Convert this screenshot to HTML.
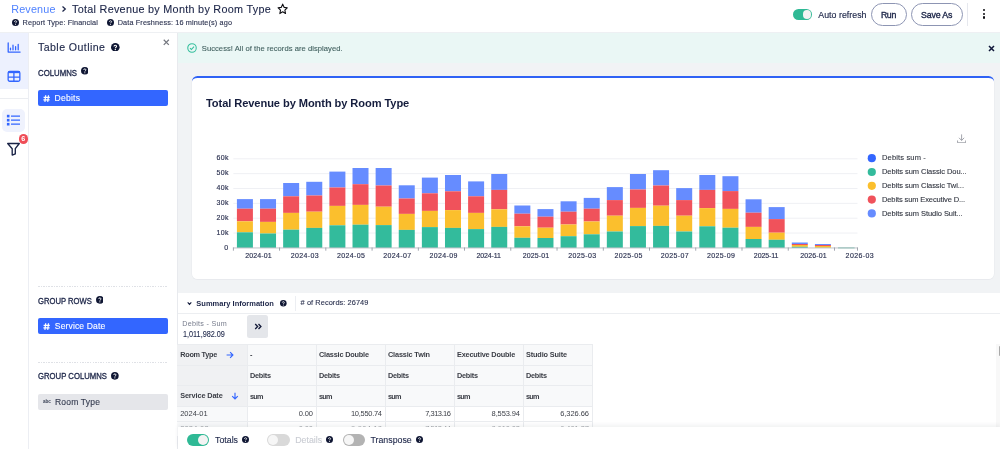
<!DOCTYPE html>
<html><head><meta charset="utf-8"><title>Total Revenue by Month by Room Type</title>
<style>
html,body{margin:0;padding:0;background:#fff;}
body{width:1000px;height:449px;position:relative;overflow:hidden;font-family:"Liberation Sans",sans-serif;-webkit-font-smoothing:antialiased;}
.abs{position:absolute;}
.t{position:absolute;white-space:nowrap;line-height:14px;height:14px;}
#root{position:absolute;left:0;top:0;width:1000px;height:449px;will-change:transform;transform:translateZ(0);}
</style></head><body><div id="root">

<div class="abs" style="left:0;top:32px;width:1000px;height:1px;background:#eef0f3"></div>
<div class="abs" style="left:0;top:33px;width:28.5px;height:55.5px;background:#edf1fe"></div>
<div class="abs" style="left:0;top:97.6px;width:28.5px;height:1px;background:#ebedf1"></div>
<div class="abs" style="left:27.9px;top:33px;width:1px;height:416px;background:#eceef3"></div>
<div class="abs" style="left:2.4px;top:108.5px;width:22.6px;height:23px;border-radius:5px;background:#eff2fd"></div>
<div class="abs" style="left:177.4px;top:33px;width:822.6px;height:260.3px;background:#f1f3f5"></div>
<div class="abs" style="left:177px;top:33px;width:1px;height:416px;background:#e8eaee"></div>
<div class="abs" style="left:178px;top:32.6px;width:822px;height:30.4px;background:#eaf7f5"></div>
<div class="abs" style="left:191.7px;top:75.7px;width:802.8px;height:203px;box-sizing:border-box;background:#fff;border-top:2.5px solid #2f62f5;border-radius:5.5px;box-shadow:0 0.4px 0 0.5px #e8eaee"></div>
<div class="abs" style="left:178px;top:313px;width:822px;height:1px;background:#eceef1"></div>
<div class="abs" style="left:294.8px;top:296px;width:1px;height:14.6px;background:#eceef2"></div>
<div class="abs" style="left:247px;top:315px;width:21.4px;height:22.6px;border-radius:2.5px;background:#e4e6ea"></div>
<svg class="abs" style="left:253.6px;top:323.4px" width="8" height="7" viewBox="0 0 8 7"><path d="M1.2 1.1 3.6 3.5 1.2 5.9M4.5 1.1 6.9 3.5 4.5 5.9" fill="none" stroke="#141b3a" stroke-width="1.35"/></svg>
<div class="abs" style="left:177.4px;top:344.2px;width:70px;height:61.8px;background:#f0f1f3"></div>
<div class="abs" style="left:247.4px;top:344.2px;width:345px;height:61.8px;background:#f8f9fa"></div>
<div class="abs" style="left:177.4px;top:406.0px;width:70px;height:30.4px;background:#f8f9fa"></div>
<div class="abs" style="left:177.4px;top:343.7px;width:415.5px;height:1px;background:#eaecef"></div>
<div class="abs" style="left:177.4px;top:364.7px;width:415.5px;height:1px;background:#eaecef"></div>
<div class="abs" style="left:177.4px;top:384.9px;width:415.5px;height:1px;background:#eaecef"></div>
<div class="abs" style="left:177.4px;top:405.5px;width:415.5px;height:1px;background:#eaecef"></div>
<div class="abs" style="left:177.4px;top:420.7px;width:415.5px;height:1px;background:#eaecef"></div>
<div class="abs" style="left:246.9px;top:344.2px;width:1px;height:90px;background:#eaecef"></div>
<div class="abs" style="left:315.9px;top:344.2px;width:1px;height:90px;background:#eaecef"></div>
<div class="abs" style="left:384.9px;top:344.2px;width:1px;height:90px;background:#eaecef"></div>
<div class="abs" style="left:453.9px;top:344.2px;width:1px;height:90px;background:#eaecef"></div>
<div class="abs" style="left:522.9px;top:344.2px;width:1px;height:90px;background:#eaecef"></div>
<div class="abs" style="left:591.9px;top:344.2px;width:1px;height:90px;background:#eaecef"></div>
<svg class="abs" style="left:225.6px;top:350.5px" width="8" height="8" viewBox="0 0 8 8"><path d="M0.6 4H6.8M4.1 1.2 6.9 4 4.1 6.8" fill="none" stroke="#3366ff" stroke-width="1.15"/></svg>
<svg class="abs" style="left:230.6px;top:391.7px" width="8" height="8" viewBox="0 0 8 8"><path d="M4 0.7V6.9M1.2 4.2 4 7 6.8 4.2" fill="none" stroke="#3366ff" stroke-width="1.15"/></svg>
<div class="abs" style="left:996.4px;top:344px;width:3.6px;height:84px;background:#f8f8f8"></div>
<div class="abs" style="left:998.5px;top:346px;width:2.5px;height:10.4px;border-radius:1.2px;background:#a9a9a9"></div>
<svg class="abs" style="left:0;top:0" width="1000" height="449" viewBox="0 0 1000 449">
<rect x="233.35" y="158.30" width="624.15" height="1" fill="#eff0f4"/>
<rect x="233.35" y="173.15" width="624.15" height="1" fill="#eff0f4"/>
<rect x="233.35" y="188.00" width="624.15" height="1" fill="#eff0f4"/>
<rect x="233.35" y="202.85" width="624.15" height="1" fill="#eff0f4"/>
<rect x="233.35" y="217.70" width="624.15" height="1" fill="#eff0f4"/>
<rect x="233.35" y="232.55" width="624.15" height="1" fill="#eff0f4"/>
<rect x="236.91" y="199.10" width="16.0" height="9.60" fill="#668cff"/>
<rect x="236.91" y="208.70" width="16.0" height="12.60" fill="#f0525b"/>
<rect x="236.91" y="221.30" width="16.0" height="11.00" fill="#fbbf2d"/>
<rect x="236.91" y="232.30" width="16.0" height="15.60" fill="#33bb9c"/>
<rect x="260.03" y="199.10" width="16.0" height="9.60" fill="#668cff"/>
<rect x="260.03" y="208.70" width="16.0" height="13.20" fill="#f0525b"/>
<rect x="260.03" y="221.90" width="16.0" height="11.60" fill="#fbbf2d"/>
<rect x="260.03" y="233.50" width="16.0" height="14.40" fill="#33bb9c"/>
<rect x="283.15" y="183.00" width="16.0" height="13.30" fill="#668cff"/>
<rect x="283.15" y="196.30" width="16.0" height="16.60" fill="#f0525b"/>
<rect x="283.15" y="212.90" width="16.0" height="16.80" fill="#fbbf2d"/>
<rect x="283.15" y="229.70" width="16.0" height="18.20" fill="#33bb9c"/>
<rect x="306.27" y="181.80" width="16.0" height="13.70" fill="#668cff"/>
<rect x="306.27" y="195.50" width="16.0" height="16.20" fill="#f0525b"/>
<rect x="306.27" y="211.70" width="16.0" height="16.20" fill="#fbbf2d"/>
<rect x="306.27" y="227.90" width="16.0" height="20.00" fill="#33bb9c"/>
<rect x="329.39" y="171.60" width="16.0" height="15.90" fill="#668cff"/>
<rect x="329.39" y="187.50" width="16.0" height="18.40" fill="#f0525b"/>
<rect x="329.39" y="205.90" width="16.0" height="19.40" fill="#fbbf2d"/>
<rect x="329.39" y="225.30" width="16.0" height="22.60" fill="#33bb9c"/>
<rect x="352.51" y="168.00" width="16.0" height="16.20" fill="#668cff"/>
<rect x="352.51" y="184.20" width="16.0" height="20.70" fill="#f0525b"/>
<rect x="352.51" y="204.90" width="16.0" height="19.80" fill="#fbbf2d"/>
<rect x="352.51" y="224.70" width="16.0" height="23.20" fill="#33bb9c"/>
<rect x="375.63" y="168.00" width="16.0" height="17.50" fill="#668cff"/>
<rect x="375.63" y="185.50" width="16.0" height="21.20" fill="#f0525b"/>
<rect x="375.63" y="206.70" width="16.0" height="18.40" fill="#fbbf2d"/>
<rect x="375.63" y="225.10" width="16.0" height="22.80" fill="#33bb9c"/>
<rect x="398.75" y="185.30" width="16.0" height="13.20" fill="#668cff"/>
<rect x="398.75" y="198.50" width="16.0" height="15.40" fill="#f0525b"/>
<rect x="398.75" y="213.90" width="16.0" height="16.00" fill="#fbbf2d"/>
<rect x="398.75" y="229.90" width="16.0" height="18.00" fill="#33bb9c"/>
<rect x="421.87" y="177.60" width="16.0" height="15.70" fill="#668cff"/>
<rect x="421.87" y="193.30" width="16.0" height="17.60" fill="#f0525b"/>
<rect x="421.87" y="210.90" width="16.0" height="16.20" fill="#fbbf2d"/>
<rect x="421.87" y="227.10" width="16.0" height="20.80" fill="#33bb9c"/>
<rect x="444.99" y="175.00" width="16.0" height="16.30" fill="#668cff"/>
<rect x="444.99" y="191.30" width="16.0" height="18.80" fill="#f0525b"/>
<rect x="444.99" y="210.10" width="16.0" height="17.80" fill="#fbbf2d"/>
<rect x="444.99" y="227.90" width="16.0" height="20.00" fill="#33bb9c"/>
<rect x="468.11" y="181.40" width="16.0" height="14.90" fill="#668cff"/>
<rect x="468.11" y="196.30" width="16.0" height="16.60" fill="#f0525b"/>
<rect x="468.11" y="212.90" width="16.0" height="16.20" fill="#fbbf2d"/>
<rect x="468.11" y="229.10" width="16.0" height="18.80" fill="#33bb9c"/>
<rect x="491.23" y="174.00" width="16.0" height="15.90" fill="#668cff"/>
<rect x="491.23" y="189.90" width="16.0" height="19.40" fill="#f0525b"/>
<rect x="491.23" y="209.30" width="16.0" height="17.60" fill="#fbbf2d"/>
<rect x="491.23" y="226.90" width="16.0" height="21.00" fill="#33bb9c"/>
<rect x="514.35" y="205.50" width="16.0" height="8.20" fill="#668cff"/>
<rect x="514.35" y="213.70" width="16.0" height="12.60" fill="#f0525b"/>
<rect x="514.35" y="226.30" width="16.0" height="11.50" fill="#fbbf2d"/>
<rect x="514.35" y="237.80" width="16.0" height="10.10" fill="#33bb9c"/>
<rect x="537.47" y="209.10" width="16.0" height="7.60" fill="#668cff"/>
<rect x="537.47" y="216.70" width="16.0" height="11.00" fill="#f0525b"/>
<rect x="537.47" y="227.70" width="16.0" height="10.30" fill="#fbbf2d"/>
<rect x="537.47" y="238.00" width="16.0" height="9.90" fill="#33bb9c"/>
<rect x="560.59" y="201.30" width="16.0" height="10.40" fill="#668cff"/>
<rect x="560.59" y="211.70" width="16.0" height="12.80" fill="#f0525b"/>
<rect x="560.59" y="224.50" width="16.0" height="11.70" fill="#fbbf2d"/>
<rect x="560.59" y="236.20" width="16.0" height="11.70" fill="#33bb9c"/>
<rect x="583.71" y="197.90" width="16.0" height="10.80" fill="#668cff"/>
<rect x="583.71" y="208.70" width="16.0" height="12.80" fill="#f0525b"/>
<rect x="583.71" y="221.50" width="16.0" height="12.80" fill="#fbbf2d"/>
<rect x="583.71" y="234.30" width="16.0" height="13.60" fill="#33bb9c"/>
<rect x="606.83" y="187.10" width="16.0" height="13.00" fill="#668cff"/>
<rect x="606.83" y="200.10" width="16.0" height="15.60" fill="#f0525b"/>
<rect x="606.83" y="215.70" width="16.0" height="15.80" fill="#fbbf2d"/>
<rect x="606.83" y="231.50" width="16.0" height="16.40" fill="#33bb9c"/>
<rect x="629.95" y="174.00" width="16.0" height="15.50" fill="#668cff"/>
<rect x="629.95" y="189.50" width="16.0" height="18.40" fill="#f0525b"/>
<rect x="629.95" y="207.90" width="16.0" height="18.20" fill="#fbbf2d"/>
<rect x="629.95" y="226.10" width="16.0" height="21.80" fill="#33bb9c"/>
<rect x="653.07" y="170.20" width="16.0" height="15.30" fill="#668cff"/>
<rect x="653.07" y="185.50" width="16.0" height="20.20" fill="#f0525b"/>
<rect x="653.07" y="205.70" width="16.0" height="20.20" fill="#fbbf2d"/>
<rect x="653.07" y="225.90" width="16.0" height="22.00" fill="#33bb9c"/>
<rect x="676.19" y="188.10" width="16.0" height="12.00" fill="#668cff"/>
<rect x="676.19" y="200.10" width="16.0" height="15.60" fill="#f0525b"/>
<rect x="676.19" y="215.70" width="16.0" height="15.80" fill="#fbbf2d"/>
<rect x="676.19" y="231.50" width="16.0" height="16.40" fill="#33bb9c"/>
<rect x="699.31" y="175.00" width="16.0" height="14.90" fill="#668cff"/>
<rect x="699.31" y="189.90" width="16.0" height="18.20" fill="#f0525b"/>
<rect x="699.31" y="208.10" width="16.0" height="18.20" fill="#fbbf2d"/>
<rect x="699.31" y="226.30" width="16.0" height="21.60" fill="#33bb9c"/>
<rect x="722.43" y="176.20" width="16.0" height="14.90" fill="#668cff"/>
<rect x="722.43" y="191.10" width="16.0" height="17.80" fill="#f0525b"/>
<rect x="722.43" y="208.90" width="16.0" height="18.80" fill="#fbbf2d"/>
<rect x="722.43" y="227.70" width="16.0" height="20.20" fill="#33bb9c"/>
<rect x="745.55" y="199.30" width="16.0" height="13.40" fill="#668cff"/>
<rect x="745.55" y="212.70" width="16.0" height="14.20" fill="#f0525b"/>
<rect x="745.55" y="226.90" width="16.0" height="12.10" fill="#fbbf2d"/>
<rect x="745.55" y="239.00" width="16.0" height="8.90" fill="#33bb9c"/>
<rect x="768.67" y="207.10" width="16.0" height="12.00" fill="#668cff"/>
<rect x="768.67" y="219.10" width="16.0" height="13.60" fill="#f0525b"/>
<rect x="768.67" y="232.70" width="16.0" height="7.10" fill="#fbbf2d"/>
<rect x="768.67" y="239.80" width="16.0" height="8.10" fill="#33bb9c"/>
<rect x="791.79" y="242.50" width="16.0" height="1.50" fill="#668cff"/>
<rect x="791.79" y="244.00" width="16.0" height="1.00" fill="#f0525b"/>
<rect x="791.79" y="245.00" width="16.0" height="1.80" fill="#fbbf2d"/>
<rect x="791.79" y="246.80" width="16.0" height="1.10" fill="#33bb9c"/>
<rect x="814.91" y="244.00" width="16.0" height="1.00" fill="#668cff"/>
<rect x="814.91" y="245.00" width="16.0" height="1.00" fill="#f0525b"/>
<rect x="814.91" y="246.00" width="16.0" height="1.80" fill="#fbbf2d"/>
<rect x="814.91" y="247.80" width="16.0" height="0.10" fill="#33bb9c"/>
<rect x="838.03" y="247.2" width="16.6" height="1.3" fill="#8fd3c1"/>
<rect x="232.95" y="247.5" width="624.95" height="0.9" fill="#b9bcc4"/>
<rect x="232.90" y="247.5" width="0.9" height="3.2" fill="#9a9ea8"/>
<rect x="279.14" y="247.5" width="0.9" height="3.2" fill="#9a9ea8"/>
<rect x="325.38" y="247.5" width="0.9" height="3.2" fill="#9a9ea8"/>
<rect x="371.62" y="247.5" width="0.9" height="3.2" fill="#9a9ea8"/>
<rect x="417.86" y="247.5" width="0.9" height="3.2" fill="#9a9ea8"/>
<rect x="464.10" y="247.5" width="0.9" height="3.2" fill="#9a9ea8"/>
<rect x="510.34" y="247.5" width="0.9" height="3.2" fill="#9a9ea8"/>
<rect x="556.58" y="247.5" width="0.9" height="3.2" fill="#9a9ea8"/>
<rect x="602.82" y="247.5" width="0.9" height="3.2" fill="#9a9ea8"/>
<rect x="649.06" y="247.5" width="0.9" height="3.2" fill="#9a9ea8"/>
<rect x="695.30" y="247.5" width="0.9" height="3.2" fill="#9a9ea8"/>
<rect x="741.54" y="247.5" width="0.9" height="3.2" fill="#9a9ea8"/>
<rect x="787.78" y="247.5" width="0.9" height="3.2" fill="#9a9ea8"/>
<rect x="834.02" y="247.5" width="0.9" height="3.2" fill="#9a9ea8"/>
<rect x="857.05" y="247.5" width="0.9" height="3.2" fill="#9a9ea8"/>
<circle cx="871.8" cy="158.20" r="4.1" fill="#3366ff"/>
<circle cx="871.8" cy="172.00" r="4.1" fill="#33bb9c"/>
<circle cx="871.8" cy="185.80" r="4.1" fill="#fbbf2d"/>
<circle cx="871.8" cy="199.60" r="4.1" fill="#f0525b"/>
<circle cx="871.8" cy="213.40" r="4.1" fill="#668cff"/>
</svg>
<svg class="abs" style="left:957px;top:133.8px" width="9.2" height="9.5" viewBox="0 0 10 10" preserveAspectRatio="none"><path d="M5 0.4V6.6M2.2 4 5 6.8 7.8 4M0.6 6.8V9.2H9.4V6.8" fill="none" stroke="#7c808a" stroke-width="0.75"/></svg>
<svg class="abs" style="left:60.6px;top:5.4px" width="6" height="8" viewBox="0 0 6 8"><path d="M1.5 1.5 4.3 4 1.5 6.5" fill="none" stroke="#1b2447" stroke-width="1.25"/></svg>
<svg class="abs" style="left:277px;top:3.1px" width="11.4" height="11.8" viewBox="0 0 24 23" preserveAspectRatio="none"><path d="M12 2.2l2.9 6.2 6.7.8-5 4.6 1.4 6.7L12 17.1l-6 3.4 1.4-6.7-5-4.6 6.7-.8z" fill="none" stroke="#0d0d12" stroke-width="2.3" stroke-linejoin="round"/></svg>
<svg class="abs" style="left:11.70px;top:19.00px" width="7" height="7" viewBox="0 0 16 16"><circle cx="8" cy="8" r="8" fill="#0f1633"/><path d="M5.6 6.3C5.6 4.9 6.6 4 8 4s2.5.9 2.5 2.1c0 1.9-2.4 1.8-2.4 3.6" fill="none" stroke="#fff" stroke-width="1.9"/><circle cx="8.05" cy="12.1" r="1.25" fill="#fff"/></svg>
<svg class="abs" style="left:107.00px;top:19.00px" width="7" height="7" viewBox="0 0 16 16"><circle cx="8" cy="8" r="8" fill="#0f1633"/><path d="M5.6 6.3C5.6 4.9 6.6 4 8 4s2.5.9 2.5 2.1c0 1.9-2.4 1.8-2.4 3.6" fill="none" stroke="#fff" stroke-width="1.9"/><circle cx="8.05" cy="12.1" r="1.25" fill="#fff"/></svg>
<div class="abs" style="left:793.2px;top:9.2px;width:19.1px;height:11px;border-radius:5.5px;background:#2fb995"></div><div class="abs" style="left:802.50px;top:10.40px;width:8.60px;height:8.60px;border-radius:50%;background:#f3f3f3"></div>
<div class="abs" style="left:871.3px;top:2.9px;width:35.7px;height:23.5px;border-radius:12px;box-sizing:border-box;border:0.8px solid #8d95b3"></div>
<div class="abs" style="left:911px;top:2.9px;width:51.6px;height:23.5px;border-radius:12px;box-sizing:border-box;border:0.8px solid #8d95b3"></div>
<div class="abs" style="left:967.3px;top:3.3px;width:1px;height:22.6px;background:#e6e8ee"></div>
<div class="abs" style="left:982.7px;top:8.80px;width:2.6px;height:2.6px;border-radius:50%;background:#0c0c10"></div>
<div class="abs" style="left:982.7px;top:12.60px;width:2.6px;height:2.6px;border-radius:50%;background:#0c0c10"></div>
<div class="abs" style="left:982.7px;top:16.40px;width:2.6px;height:2.6px;border-radius:50%;background:#0c0c10"></div>
<svg class="abs" style="left:186.8px;top:42.8px" width="10" height="10" viewBox="0 0 10 10"><circle cx="5" cy="5" r="4.25" fill="none" stroke="#35bf9d" stroke-width="1.05"/><path d="M3 5.1 4.4 6.5 7 3.7" fill="none" stroke="#35bf9d" stroke-width="1.1"/></svg>
<svg class="abs" style="left:987.6px;top:44.6px" width="7" height="7" viewBox="0 0 7 7"><path d="M1 1 6 6M6 1 1 6" stroke="#10183a" stroke-width="1.5"/></svg>
<svg class="abs" style="left:7px;top:42px" width="14" height="12" viewBox="0 0 14 12"><path d="M1.2 1V10.1H13.1" fill="none" stroke="#3366ff" stroke-width="1.3" stroke-linecap="round" stroke-linejoin="round"/><path d="M3.5 7.8V6.2M6 7.8V3.2M8.6 7.8V4.7M11.2 7.8V2.3" stroke="#3366ff" stroke-width="1.3" stroke-linecap="round"/></svg>
<svg class="abs" style="left:7px;top:70px" width="14" height="13" viewBox="0 0 14 13"><rect x="1.15" y="1.45" width="11.7" height="9.8" rx="1.5" fill="none" stroke="#3366ff" stroke-width="1.3"/><path d="M1 2.2H13" stroke="#3366ff" stroke-width="1.9"/><path d="M1 7.1H13M6.9 3V11.5" stroke="#3366ff" stroke-width="1.3"/></svg>
<svg class="abs" style="left:6px;top:113px" width="15" height="14" viewBox="0 0 15 14"><path d="M5 3.1H14M5 7.2H14M5 11.2H14" stroke="#3366ff" stroke-width="1.25"/><rect x="0.9" y="1.8" width="2.6" height="2.6" fill="#3366ff"/><rect x="0.9" y="5.9" width="2.6" height="2.6" fill="#3366ff"/><rect x="0.9" y="9.9" width="2.6" height="2.6" fill="#3366ff"/></svg>
<svg class="abs" style="left:6px;top:141px" width="15" height="16" viewBox="0 0 15 16"><path d="M1.7 2.5H13.3L9.3 7.7V12.9L6.2 14.1V7.7Z" fill="none" stroke="#1a2346" stroke-width="1.35" stroke-linejoin="round"/></svg>
<div class="abs" style="left:18.7px;top:134.3px;width:9.4px;height:9.4px;border-radius:50%;background:#ef4d57"></div>
<span class="t" style="left:21.35px;top:132px;font-size:7.2px;font-weight:700;color:#fff">6</span>
<svg class="abs" style="left:163.2px;top:39.4px" width="6.6" height="6.6" viewBox="0 0 7 7"><path d="M0.8 0.8 6.2 6.2M6.2 0.8 0.8 6.2" stroke="#74777f" stroke-width="1.3"/></svg>
<svg class="abs" style="left:111.30px;top:42.70px" width="8.6" height="8.6" viewBox="0 0 16 16"><circle cx="8" cy="8" r="8" fill="#0f1633"/><path d="M5.6 6.3C5.6 4.9 6.6 4 8 4s2.5.9 2.5 2.1c0 1.9-2.4 1.8-2.4 3.6" fill="none" stroke="#fff" stroke-width="1.9"/><circle cx="8.05" cy="12.1" r="1.25" fill="#fff"/></svg>
<svg class="abs" style="left:80.50px;top:67.40px" width="7.6" height="7.6" viewBox="0 0 16 16"><circle cx="8" cy="8" r="8" fill="#0f1633"/><path d="M5.6 6.3C5.6 4.9 6.6 4 8 4s2.5.9 2.5 2.1c0 1.9-2.4 1.8-2.4 3.6" fill="none" stroke="#fff" stroke-width="1.9"/><circle cx="8.05" cy="12.1" r="1.25" fill="#fff"/></svg>
<svg class="abs" style="left:95.65px;top:296.15px" width="7.7" height="7.7" viewBox="0 0 16 16"><circle cx="8" cy="8" r="8" fill="#0f1633"/><path d="M5.6 6.3C5.6 4.9 6.6 4 8 4s2.5.9 2.5 2.1c0 1.9-2.4 1.8-2.4 3.6" fill="none" stroke="#fff" stroke-width="1.9"/><circle cx="8.05" cy="12.1" r="1.25" fill="#fff"/></svg>
<svg class="abs" style="left:110.85px;top:371.85px" width="7.7" height="7.7" viewBox="0 0 16 16"><circle cx="8" cy="8" r="8" fill="#0f1633"/><path d="M5.6 6.3C5.6 4.9 6.6 4 8 4s2.5.9 2.5 2.1c0 1.9-2.4 1.8-2.4 3.6" fill="none" stroke="#fff" stroke-width="1.9"/><circle cx="8.05" cy="12.1" r="1.25" fill="#fff"/></svg>
<div class="abs" style="left:38px;top:90px;width:130px;height:15.8px;border-radius:2px;background:#3366ff"></div>
<div class="abs" style="left:38px;top:318px;width:130px;height:15.8px;border-radius:2px;background:#3366ff"></div>
<div class="abs" style="left:38px;top:394.4px;width:130px;height:15.8px;border-radius:2px;background:#e5e6ea"></div>
<svg class="abs" style="left:42.9px;top:94.7px" width="7.2" height="7.2" viewBox="0 0 7 7.2"><path d="M2.6 0.3 1.8 6.9M5.4 0.3 4.6 6.9M0.5 2.4H6.7M0.3 4.8H6.5" stroke="#fff" stroke-width="1.22" fill="none"/></svg>
<svg class="abs" style="left:42.9px;top:322.7px" width="7.2" height="7.2" viewBox="0 0 7 7.2"><path d="M2.6 0.3 1.8 6.9M5.4 0.3 4.6 6.9M0.5 2.4H6.7M0.3 4.8H6.5" stroke="#fff" stroke-width="1.22" fill="none"/></svg>
<div class="abs" style="left:38px;top:285.9px;width:130px;height:1px;background:repeating-linear-gradient(90deg,#dfe1e6 0,#dfe1e6 1.5px,transparent 1.5px,transparent 2.6px)"></div>
<div class="abs" style="left:38px;top:361.5px;width:130px;height:1px;background:repeating-linear-gradient(90deg,#dfe1e6 0,#dfe1e6 1.5px,transparent 1.5px,transparent 2.6px)"></div>
<svg class="abs" style="left:186.6px;top:300.6px" width="5" height="5" viewBox="0 0 5 5"><path d="M0.7 1.4 2.5 3.4 4.3 1.4" fill="none" stroke="#10183a" stroke-width="1.1"/></svg>
<svg class="abs" style="left:280.30px;top:300.00px" width="6.6" height="6.6" viewBox="0 0 16 16"><circle cx="8" cy="8" r="8" fill="#0f1633"/><path d="M5.6 6.3C5.6 4.9 6.6 4 8 4s2.5.9 2.5 2.1c0 1.9-2.4 1.8-2.4 3.6" fill="none" stroke="#fff" stroke-width="1.9"/><circle cx="8.05" cy="12.1" r="1.25" fill="#fff"/></svg>
<span class="t" id="t0" style="left:11.20px;top:2px;font-size:10.8px;color:#4f82ff;letter-spacing:0.178px;">Revenue</span>
<span class="t" id="t1" style="left:72.00px;top:2px;font-size:10.8px;color:#1b2447;letter-spacing:0.289px;-webkit-text-stroke:0.12px #1b2447;">Total Revenue by Month by Room Type</span>
<span class="t" id="t2" style="left:22.60px;top:16px;font-size:7.3px;color:#2c3350;letter-spacing:0.111px;-webkit-text-stroke:0.12px #2c3350;">Report Type: Financial</span>
<span class="t" id="t3" style="left:117.70px;top:16px;font-size:7.3px;color:#2c3350;letter-spacing:0.128px;-webkit-text-stroke:0.12px #2c3350;">Data Freshness: 16 minute(s) ago</span>
<span class="t" id="t4" style="left:818.30px;top:8px;font-size:8.8px;color:#1b2447;letter-spacing:0.025px;-webkit-text-stroke:0.15px #1b2447;">Auto refresh</span>
<span class="t" id="t5" style="left:880.90px;top:8px;font-size:8.8px;color:#1b2447;letter-spacing:-0.370px;-webkit-text-stroke:0.35px #1b2447;">Run</span>
<span class="t" id="t6" style="left:921.00px;top:8px;font-size:8.8px;color:#1b2447;letter-spacing:-0.130px;-webkit-text-stroke:0.35px #1b2447;">Save As</span>
<span class="t" id="t7" style="left:38.00px;top:40px;font-size:10.6px;color:#1b2447;letter-spacing:0.430px;-webkit-text-stroke:0.12px #1b2447;">Table Outline</span>
<span class="t" id="t8" style="left:38.00px;top:66px;font-size:8.6px;color:#1b2447;transform-origin:0 0;transform:scaleX(0.9073);-webkit-text-stroke:0.3px #1b2447;">COLUMNS</span>
<span class="t" id="t9" style="left:54.60px;top:91px;font-size:8.6px;color:#ffffff;letter-spacing:0.208px;-webkit-text-stroke:0.1px #ffffff;">Debits</span>
<span class="t" id="t10" style="left:38.00px;top:294px;font-size:8.6px;color:#1b2447;transform-origin:0 0;transform:scaleX(0.8895);-webkit-text-stroke:0.3px #1b2447;">GROUP ROWS</span>
<span class="t" id="t11" style="left:54.80px;top:319px;font-size:8.6px;color:#ffffff;letter-spacing:0.109px;-webkit-text-stroke:0.1px #ffffff;">Service Date</span>
<span class="t" id="t12" style="left:38.10px;top:369px;font-size:8.6px;color:#1b2447;transform-origin:0 0;transform:scaleX(0.8981);-webkit-text-stroke:0.3px #1b2447;">GROUP COLUMNS</span>
<span class="t" id="t13" style="left:55.00px;top:395px;font-size:8.5px;color:#333a4e;letter-spacing:0.198px;-webkit-text-stroke:0.12px #333a4e;">Room Type</span>
<span class="t" id="t14" style="left:43.00px;top:395px;font-size:4.6px;color:#3a4256;letter-spacing:-0.011px;font-weight:700;">abc</span>
<span class="t" id="t15" style="left:201.80px;top:42px;font-size:7.6px;color:#41605f;letter-spacing:0.047px;-webkit-text-stroke:0.1px #41605f;">Success! All of the records are displayed.</span>
<span class="t" id="t16" style="left:206.00px;top:96px;font-size:11.1px;color:#151d3d;letter-spacing:-0.082px;font-weight:700;">Total Revenue by Month by Room Type</span>
<span class="t" id="t17" style="left:216.60px;top:151px;font-size:7.0px;color:#2b3150;letter-spacing:0.352px;-webkit-text-stroke:0.15px #2b3150;">60k</span>
<span class="t" id="t18" style="left:216.60px;top:166px;font-size:7.0px;color:#2b3150;letter-spacing:0.352px;-webkit-text-stroke:0.15px #2b3150;">50k</span>
<span class="t" id="t19" style="left:216.60px;top:181px;font-size:7.0px;color:#2b3150;letter-spacing:0.352px;-webkit-text-stroke:0.15px #2b3150;">40k</span>
<span class="t" id="t20" style="left:216.60px;top:196px;font-size:7.0px;color:#2b3150;letter-spacing:0.352px;-webkit-text-stroke:0.15px #2b3150;">30k</span>
<span class="t" id="t21" style="left:216.60px;top:211px;font-size:7.0px;color:#2b3150;letter-spacing:0.352px;-webkit-text-stroke:0.15px #2b3150;">20k</span>
<span class="t" id="t22" style="left:216.60px;top:226px;font-size:7.0px;color:#2b3150;letter-spacing:0.352px;-webkit-text-stroke:0.15px #2b3150;">10k</span>
<span class="t" id="t23" style="left:224.20px;top:241px;font-size:7.0px;color:#2b3150;letter-spacing:0.000px;-webkit-text-stroke:0.15px #2b3150;">0</span>
<span class="t" id="t24" style="left:245.30px;top:249px;font-size:7.0px;color:#2b3150;letter-spacing:0.116px;-webkit-text-stroke:0.15px #2b3150;">2024-01</span>
<span class="t" id="t25" style="left:290.74px;top:249px;font-size:7.0px;color:#2b3150;letter-spacing:0.383px;-webkit-text-stroke:0.15px #2b3150;">2024-03</span>
<span class="t" id="t26" style="left:336.98px;top:249px;font-size:7.0px;color:#2b3150;letter-spacing:0.383px;-webkit-text-stroke:0.15px #2b3150;">2024-05</span>
<span class="t" id="t27" style="left:383.22px;top:249px;font-size:7.0px;color:#2b3150;letter-spacing:0.383px;-webkit-text-stroke:0.15px #2b3150;">2024-07</span>
<span class="t" id="t28" style="left:429.46px;top:249px;font-size:7.0px;color:#2b3150;letter-spacing:0.383px;-webkit-text-stroke:0.15px #2b3150;">2024-09</span>
<span class="t" id="t29" style="left:476.40px;top:249px;font-size:7.0px;color:#2b3150;letter-spacing:-0.095px;-webkit-text-stroke:0.15px #2b3150;">2024-11</span>
<span class="t" id="t30" style="left:522.74px;top:249px;font-size:7.0px;color:#2b3150;letter-spacing:0.116px;-webkit-text-stroke:0.15px #2b3150;">2025-01</span>
<span class="t" id="t31" style="left:568.18px;top:249px;font-size:7.0px;color:#2b3150;letter-spacing:0.383px;-webkit-text-stroke:0.15px #2b3150;">2025-03</span>
<span class="t" id="t32" style="left:614.42px;top:249px;font-size:7.0px;color:#2b3150;letter-spacing:0.383px;-webkit-text-stroke:0.15px #2b3150;">2025-05</span>
<span class="t" id="t33" style="left:660.66px;top:249px;font-size:7.0px;color:#2b3150;letter-spacing:0.383px;-webkit-text-stroke:0.15px #2b3150;">2025-07</span>
<span class="t" id="t34" style="left:706.90px;top:249px;font-size:7.0px;color:#2b3150;letter-spacing:0.383px;-webkit-text-stroke:0.15px #2b3150;">2025-09</span>
<span class="t" id="t35" style="left:753.84px;top:249px;font-size:7.0px;color:#2b3150;letter-spacing:-0.095px;-webkit-text-stroke:0.15px #2b3150;">2025-11</span>
<span class="t" id="t36" style="left:800.18px;top:249px;font-size:7.0px;color:#2b3150;letter-spacing:0.116px;-webkit-text-stroke:0.15px #2b3150;">2026-01</span>
<span class="t" id="t37" style="left:845.62px;top:249px;font-size:7.0px;color:#2b3150;letter-spacing:0.383px;-webkit-text-stroke:0.15px #2b3150;">2026-03</span>
<span class="t" id="t38" style="left:882.00px;top:151px;font-size:7.5px;color:#30343f;letter-spacing:0.155px;-webkit-text-stroke:0.1px #30343f;">Debits sum -</span>
<span class="t" id="t39" style="left:882.00px;top:165px;font-size:7.5px;color:#30343f;letter-spacing:-0.048px;-webkit-text-stroke:0.1px #30343f;">Debits sum Classic Dou...</span>
<span class="t" id="t40" style="left:882.00px;top:179px;font-size:7.5px;color:#30343f;letter-spacing:-0.051px;-webkit-text-stroke:0.1px #30343f;">Debits sum Classic Twi...</span>
<span class="t" id="t41" style="left:882.00px;top:193px;font-size:7.5px;color:#30343f;letter-spacing:-0.116px;-webkit-text-stroke:0.1px #30343f;">Debits sum Executive D...</span>
<span class="t" id="t42" style="left:882.00px;top:207px;font-size:7.5px;color:#30343f;letter-spacing:-0.059px;-webkit-text-stroke:0.1px #30343f;">Debits sum Studio Suit...</span>
<span class="t" id="t43" style="left:196.30px;top:297px;font-size:7.5px;color:#1b2447;letter-spacing:-0.001px;font-weight:700;">Summary Information</span>
<span class="t" id="t44" style="left:300.60px;top:296px;font-size:7.4px;color:#2c3350;letter-spacing:0.069px;-webkit-text-stroke:0.12px #2c3350;"># of Records: 26749</span>
<span class="t" id="t45" style="left:182.30px;top:317px;font-size:7.2px;color:#777c8c;letter-spacing:0.259px;">Debits - Sum</span>
<span class="t" id="t46" style="left:182.50px;top:327px;font-size:8.8px;color:#1b2447;transform-origin:0 0;transform:scaleX(0.8261);-webkit-text-stroke:0.1px #1b2447;">1,011,982.09</span>
<span class="t" id="t47" style="left:180.20px;top:348px;font-size:7.3px;color:#3a3d45;letter-spacing:-0.263px;font-weight:700;">Room Type</span>
<span class="t" id="t48" style="left:180.20px;top:389px;font-size:7.3px;color:#3a3d45;letter-spacing:-0.119px;font-weight:700;">Service Date</span>
<span class="t" id="t49" style="left:250.00px;top:348px;font-size:7.3px;color:#3a3d45;letter-spacing:0.000px;font-weight:700;">-</span>
<span class="t" id="t50" style="left:250.00px;top:369px;font-size:7.3px;color:#3a3d45;letter-spacing:-0.263px;font-weight:700;">Debits</span>
<span class="t" id="t51" style="left:250.00px;top:390px;font-size:7.3px;color:#3a3d45;letter-spacing:-0.708px;font-weight:700;">sum</span>
<span class="t" id="t52" style="left:319.00px;top:348px;font-size:7.3px;color:#3a3d45;letter-spacing:-0.178px;font-weight:700;">Classic Double</span>
<span class="t" id="t53" style="left:319.00px;top:369px;font-size:7.3px;color:#3a3d45;letter-spacing:-0.263px;font-weight:700;">Debits</span>
<span class="t" id="t54" style="left:319.00px;top:390px;font-size:7.3px;color:#3a3d45;letter-spacing:-0.708px;font-weight:700;">sum</span>
<span class="t" id="t55" style="left:388.00px;top:348px;font-size:7.3px;color:#3a3d45;letter-spacing:-0.152px;font-weight:700;">Classic Twin</span>
<span class="t" id="t56" style="left:388.00px;top:369px;font-size:7.3px;color:#3a3d45;letter-spacing:-0.263px;font-weight:700;">Debits</span>
<span class="t" id="t57" style="left:388.00px;top:390px;font-size:7.3px;color:#3a3d45;letter-spacing:-0.708px;font-weight:700;">sum</span>
<span class="t" id="t58" style="left:457.00px;top:348px;font-size:7.3px;color:#3a3d45;letter-spacing:-0.175px;font-weight:700;">Executive Double</span>
<span class="t" id="t59" style="left:457.00px;top:369px;font-size:7.3px;color:#3a3d45;letter-spacing:-0.263px;font-weight:700;">Debits</span>
<span class="t" id="t60" style="left:457.00px;top:390px;font-size:7.3px;color:#3a3d45;letter-spacing:-0.708px;font-weight:700;">sum</span>
<span class="t" id="t61" style="left:526.00px;top:348px;font-size:7.3px;color:#3a3d45;letter-spacing:-0.143px;font-weight:700;">Studio Suite</span>
<span class="t" id="t62" style="left:526.00px;top:369px;font-size:7.3px;color:#3a3d45;letter-spacing:-0.263px;font-weight:700;">Debits</span>
<span class="t" id="t63" style="left:526.00px;top:390px;font-size:7.3px;color:#3a3d45;letter-spacing:-0.708px;font-weight:700;">sum</span>
<span class="t" id="t64" style="left:180.20px;top:407px;font-size:7.5px;color:#3f424a;letter-spacing:-0.022px;">2024-01</span>
<span class="t" id="t65" style="left:180.20px;top:422px;font-size:7.5px;color:#a0a3a9;letter-spacing:0.145px;">2024-02</span>
<span class="t" id="t66" style="left:298.80px;top:407px;font-size:7.5px;color:#3f424a;letter-spacing:-0.136px;">0.00</span>
<span class="t" id="t67" style="left:298.80px;top:422px;font-size:7.5px;color:#a0a3a9;letter-spacing:-0.136px;">0.00</span>
<span class="t" id="t68" style="left:351.00px;top:407px;font-size:7.5px;color:#3f424a;letter-spacing:-0.297px;">10,550.74</span>
<span class="t" id="t69" style="left:351.00px;top:422px;font-size:7.5px;color:#a0a3a9;letter-spacing:0.257px;">9,904.18</span>
<span class="t" id="t70" style="left:425.20px;top:407px;font-size:7.5px;color:#3f424a;letter-spacing:-0.486px;">7,313.16</span>
<span class="t" id="t71" style="left:425.20px;top:422px;font-size:7.5px;color:#a0a3a9;letter-spacing:-0.486px;">7,512.44</span>
<span class="t" id="t72" style="left:491.60px;top:407px;font-size:7.5px;color:#3f424a;letter-spacing:-0.115px;">8,553.94</span>
<span class="t" id="t73" style="left:491.60px;top:422px;font-size:7.5px;color:#a0a3a9;letter-spacing:-0.115px;">8,610.02</span>
<span class="t" id="t74" style="left:560.20px;top:407px;font-size:7.5px;color:#3f424a;letter-spacing:-0.058px;">6,326.66</span>
<span class="t" id="t75" style="left:560.20px;top:422px;font-size:7.5px;color:#a0a3a9;letter-spacing:-0.058px;">6,401.37</span>
<div class="abs" style="left:177.6px;top:427.3px;width:822.4px;height:22px;background:#fff;box-shadow:0 -2px 4px rgba(40,50,70,0.07)"></div>
<div class="abs" style="left:186.7px;top:433.6px;width:22.5px;height:12.5px;border-radius:6.25px;background:#2fb995"></div><div class="abs" style="left:197.90px;top:434.80px;width:10.10px;height:10.10px;border-radius:50%;background:#f3f3f3"></div>
<div class="abs" style="left:267.2px;top:433.6px;width:22.5px;height:12.5px;border-radius:6.25px;background:#d9d9d9"></div><div class="abs" style="left:268.40px;top:434.80px;width:10.10px;height:10.10px;border-radius:50%;background:#f6f6f6"></div>
<div class="abs" style="left:342.6px;top:433.6px;width:22.3px;height:12.5px;border-radius:6.25px;background:#b3b3b3"></div><div class="abs" style="left:343.80px;top:434.80px;width:10.10px;height:10.10px;border-radius:50%;background:#f6f6f6"></div>
<svg class="abs" style="left:242.00px;top:436.30px" width="7" height="7" viewBox="0 0 16 16"><circle cx="8" cy="8" r="8" fill="#0f1633"/><path d="M5.6 6.3C5.6 4.9 6.6 4 8 4s2.5.9 2.5 2.1c0 1.9-2.4 1.8-2.4 3.6" fill="none" stroke="#fff" stroke-width="1.9"/><circle cx="8.05" cy="12.1" r="1.25" fill="#fff"/></svg>
<svg class="abs" style="left:325.70px;top:436.30px" width="7" height="7" viewBox="0 0 16 16"><circle cx="8" cy="8" r="8" fill="#0f1633"/><path d="M5.6 6.3C5.6 4.9 6.6 4 8 4s2.5.9 2.5 2.1c0 1.9-2.4 1.8-2.4 3.6" fill="none" stroke="#fff" stroke-width="1.9"/><circle cx="8.05" cy="12.1" r="1.25" fill="#fff"/></svg>
<svg class="abs" style="left:416.00px;top:436.30px" width="7" height="7" viewBox="0 0 16 16"><circle cx="8" cy="8" r="8" fill="#0f1633"/><path d="M5.6 6.3C5.6 4.9 6.6 4 8 4s2.5.9 2.5 2.1c0 1.9-2.4 1.8-2.4 3.6" fill="none" stroke="#fff" stroke-width="1.9"/><circle cx="8.05" cy="12.1" r="1.25" fill="#fff"/></svg>
<span class="t" id="t76" style="left:215.00px;top:433px;font-size:8.8px;color:#1b2447;letter-spacing:0.003px;-webkit-text-stroke:0.1px #1b2447;">Totals</span>
<span class="t" id="t77" style="left:295.20px;top:433px;font-size:8.8px;color:#c9ccd3;letter-spacing:0.018px;-webkit-text-stroke:0.1px #c9ccd3;">Details</span>
<span class="t" id="t78" style="left:370.50px;top:433px;font-size:8.8px;color:#1b2447;letter-spacing:-0.006px;-webkit-text-stroke:0.1px #1b2447;">Transpose</span>
</div></body></html>
